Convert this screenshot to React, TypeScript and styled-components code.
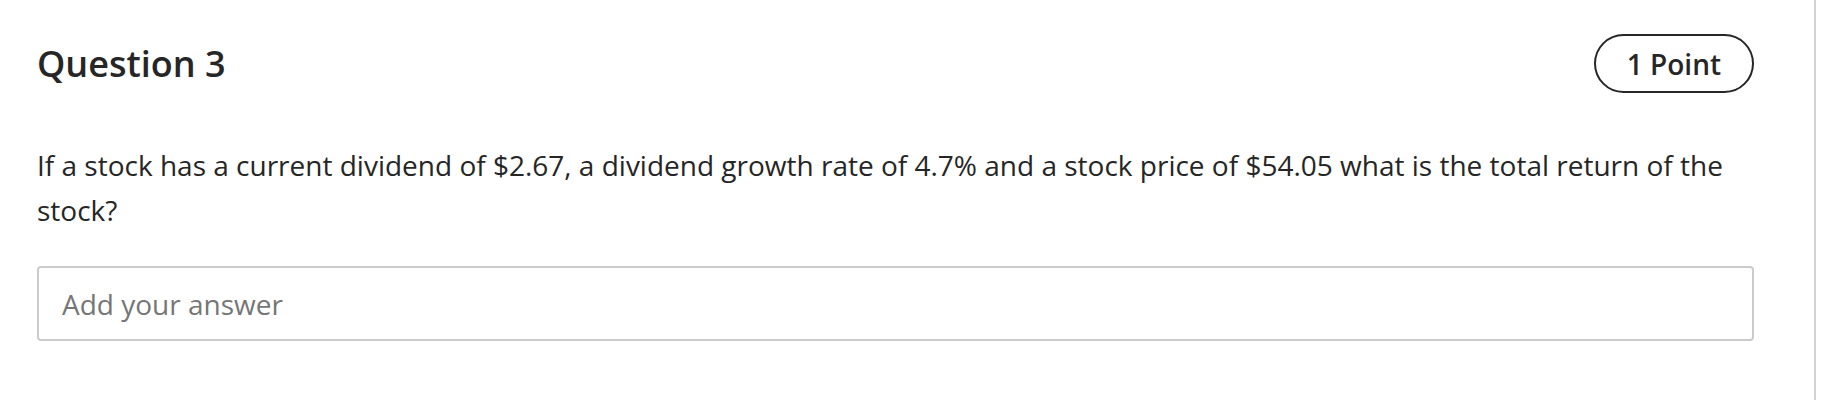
import React from "react";
import styled, { createGlobalStyle } from "styled-components";

const GlobalStyle = createGlobalStyle`
  html, body {
    margin: 0;
    padding: 0;
    background: #ffffff;
    font-family: "Open Sans", "Noto Sans", sans-serif;
  }
`;

const Page = styled.div`
  display: flex;
  height: 400px;
  background: #ffffff;
`;

const Card = styled.section`
  box-sizing: border-box;
  width: 1816px;
  height: 400px;
  padding: 34px 60px 0 37px;
  border-right: 2px solid #d2d2d2;
  display: flex;
  flex-direction: column;
`;

const Header = styled.header`
  display: flex;
  align-items: center;
  justify-content: space-between;
  height: 59px;
`;

const Title = styled.h2`
  margin: 0;
  font-size: 36px;
  font-weight: 600;
  color: #262626;
  line-height: 1;
`;

const Points = styled.span`
  box-sizing: border-box;
  height: 59px;
  display: inline-flex;
  align-items: center;
  padding: 0 31px;
  border: 2px solid #262626;
  border-radius: 30px;
  font-size: 28px;
  font-weight: 600;
  color: #262626;
`;

const Prompt = styled.p`
  margin: 50px 0 0;
  font-size: 28px;
  line-height: 45px;
  color: #262626;
`;

const Answer = styled.input`
  box-sizing: border-box;
  margin-top: 33px;
  width: 100%;
  height: 75px;
  padding: 0 23px;
  border: 2px solid #cbcbcb;
  border-radius: 4px;
  font-family: "Open Sans", "Noto Sans", sans-serif;
  font-size: 28px;
  color: #262626;
  outline: none;
  &::placeholder {
    color: #767676;
  }
`;

export default function App() {
  return (
    <>
      <GlobalStyle />
      <Page>
        <Card>
          <Header>
            <Title>Question 3</Title>
            <Points>1 Point</Points>
          </Header>
          <Prompt>
            If a stock has a current dividend of $2.67, a dividend growth rate of 4.7% and a stock price of $54.05 what is the total return of the stock?
          </Prompt>
          <Answer placeholder="Add your answer" />
        </Card>
      </Page>
    </>
  );
}
